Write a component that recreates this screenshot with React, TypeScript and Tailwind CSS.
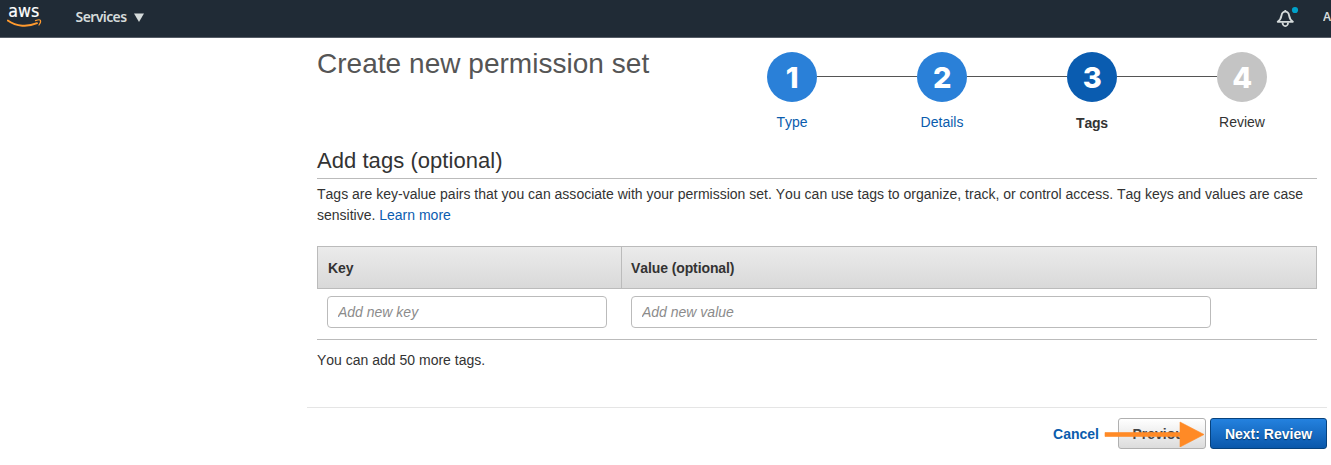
import React from "react";

const steps = [
  { n: 1, label: "Type", circle: "bg-[#2a80d8]", text: "text-[#0a5cad]" },
  { n: 2, label: "Details", circle: "bg-[#2a80d8]", text: "text-[#0a5cad]" },
  { n: 3, label: "Tags", circle: "bg-[#0a5cb0]", text: "pt-px font-bold text-[#333] tracking-[-0.2px]" },
  { n: 4, label: "Review", circle: "bg-[#c4c4c4]", text: "text-[#333]" },
];

function TopBar() {
  return (
    <header className="flex h-[38px] items-start overflow-hidden border-b border-[#555c66] bg-[#202b36] font-['Noto_Sans',sans-serif]">
      <svg className="ml-[7px] shrink-0" width="36" height="30" viewBox="0 0 36 30">
        <text x="1.2" y="17" fill="#fff" stroke="#fff" strokeWidth=".2" fontSize="17.4" fontFamily="DejaVu Sans" textLength="31" lengthAdjust="spacingAndGlyphs">aws</text>
        <path d="M.8 20.600C9.500 26.800 21 27.100 30 23.200" fill="none" stroke="#ff9a2e" strokeWidth="1.900" strokeLinecap="round" />
        <path d="M28.500 20.600C30.500 19.900 33 19.700 33.400 20.300C33.800 21.200 33 23.700 32 25" fill="none" stroke="#ff9a2e" strokeWidth="1.200" strokeLinecap="round" />
      </svg>
      <button className="ml-[32px] mt-[7px] flex h-5 items-center text-sm font-semibold leading-5 tracking-[-0.6px] text-[#d5dbdb]">
        <span className="w-[52px] whitespace-nowrap">Services</span>
        <svg className="ml-[7px]" width="10" height="9" viewBox="0 0 10 9"><path d="M0 .5h10L5 9z" fill="#d5dbdb" /></svg>
      </button>
      <div className="ml-auto flex">
        <svg className="mt-[6px]" width="26" height="24" viewBox="0 0 26 24">
          <path d="M1.700 15.800C4.600 13.800 5.100 12 5.500 9.500C5.900 7 7.200 5.600 9.300 5.600C11.400 5.600 12.700 7 13.100 9.500C13.500 12 14 13.800 16.900 15.800Z" fill="none" stroke="#d5dbdb" strokeWidth="1.800" strokeLinejoin="round" />
          <path d="M9.300 4v2M6.500 16.500a2.800 3.600 0 0 0 5.600 0" fill="none" stroke="#d5dbdb" strokeWidth="1.800" />
          <circle cx="19" cy="4" r="3.100" fill="#00a1c9" />
        </svg>
        <span className="ml-[21px] mt-[9px] w-[8px] overflow-hidden text-[12px] font-semibold leading-4 text-[#d5dbdb]">A</span>
      </div>
    </header>
  );
}

function Stepper() {
  return (
    <ol className="flex">
      {steps.map((s, i) => (
        <li key={s.n} className="flex w-[150px] flex-col items-center">
          <div className="flex w-full items-center">
            <span className={i === 0 ? "mb-px h-px flex-1" : "mb-px h-px flex-1 bg-[#555]"} />
            <span className={`flex size-[50px] items-center justify-center rounded-full font-['Inter',sans-serif] text-[29px] font-extrabold leading-none tracking-[-0.5px] text-white ${s.circle}`}>{s.n}</span>
            <span className={i === 3 ? "mb-px h-px flex-1" : "mb-px h-px flex-1 bg-[#555]"} />
          </div>
          <span className={`mt-[10px] leading-5 ${s.text}`}>{s.label}</span>
        </li>
      ))}
    </ol>
  );
}

export default function App() {
  return (
    <div className="h-[465px] w-[1331px] overflow-hidden bg-white font-['Liberation_Sans',Arial,sans-serif] text-sm text-[#333] [font-kerning:none]">
      <TopBar />
      <main className="ml-[317px] w-[1000px]">
        <div className="flex h-[109px] justify-between pt-[14px]">
          <h1 className="text-[28px] leading-[24px] tracking-[0.03px] text-[#555]">Create new permission set</h1>
          <Stepper />
        </div>
        <h2 className="h-8 border-b border-[#bbb] text-[22px] leading-[28px] tracking-[0.05px]">Add tags (optional)</h2>
        <p className="mt-[5px] leading-[21px]">
          <span className="block whitespace-nowrap tracking-[0.006px]">Tags are key-value pairs that you can associate with your permission set. You can use tags to organize, track, or control access. Tag keys and values are case</span>
          sensitive. <a className="text-[#0a5cb0]">Learn more</a>
        </p>
        <div className="mt-5 grid h-[43px] grid-cols-[304px_1fr] border border-[#bbb] bg-linear-to-b from-[#ebebeb] to-[#d9d9d9] font-bold leading-[42px] tracking-[-0.1px]">
          <span className="border-r border-[#bbb] pl-[10px]">Key</span>
          <span className="pl-[9px]">Value (optional)</span>
        </div>
        <div className="flex h-[51px] gap-6 border-b border-[#bbb] pl-[10px] pt-[7px]">
          <input className="h-8 w-[280px] rounded-[4px] border border-[#bbb] px-[10px] italic outline-none placeholder:text-[#8b8b8b]" placeholder="Add new key" />
          <input className="h-8 w-[580px] rounded-[4px] border border-[#bbb] px-[10px] italic outline-none placeholder:text-[#8b8b8b]" placeholder="Add new value" />
        </div>
        <p className="mt-[10px] leading-5">You can add 50 more tags.</p>
      </main>
      <footer className="ml-[307px] mt-[37px] flex w-[1020px] items-start justify-end border-t border-[#e5e5e5] pt-[10px] font-bold">
        <div className="relative flex">
          <button className="mr-[19px] h-8 text-[#0a5cad]">Cancel</button>
          <button className="mr-1 h-[31px] w-[88px] rounded-[3px] border border-[#b0b0b0] bg-linear-to-b from-white to-[#dcdcdc] text-[#444]">Previous</button>
          <svg className="absolute right-[5px] top-[3px]" width="101" height="26" viewBox="0 0 101 26"><path d="M1 11.500h75V1L100 13.500L76 26V15.500H1z" fill="#ff8a26" stroke="#ff8a26" strokeWidth=".6" /></svg>
        </div>
        <button className="h-[31px] w-[117px] rounded-[3px] border border-[#07427d] bg-linear-to-b from-[#2482df] to-[#0a58ab] text-white [text-shadow:0_1px_1px_#00305f]">Next: Review</button>
      </footer>
    </div>
  );
}
